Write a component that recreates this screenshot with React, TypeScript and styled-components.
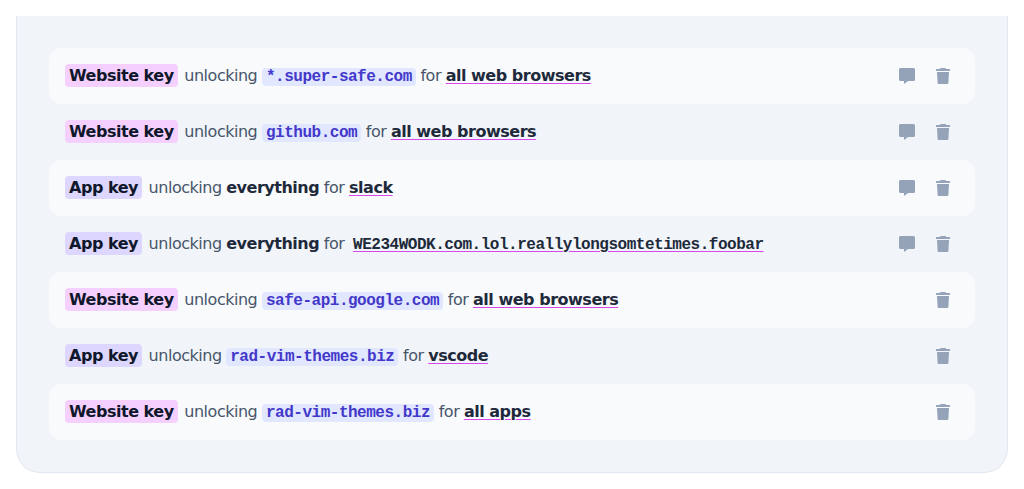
import React from 'react';
import styled, { createGlobalStyle, css } from 'styled-components';

const GlobalStyle = createGlobalStyle`
  *, *::before, *::after { box-sizing: border-box; }
  body {
    margin: 0;
    padding: 16px;
    background: #ffffff;
    color: #475569;
    font-family: "DejaVu Sans", sans-serif;
    font-size: 16px;
    line-height: 24px;
    letter-spacing: -0.03em;
  }
`;

const Panel = styled.section`
  padding: 32px;
  background: #f1f5f9;
  border: 1px solid #e2e8f0;
  border-top: 0;
  border-radius: 0 0 24px 24px;
`;

const KeyList = styled.ul`
  margin: 0;
  padding: 0;
  list-style: none;
`;

const KeyRow = styled.li`
  display: flex;
  align-items: center;
  justify-content: space-between;
  gap: 16px;
  padding: 12px 16px;
  border-radius: 12px;

  &:nth-child(odd) {
    background: #f8fafc;
  }
`;

const Description = styled.p`
  margin: 0;
  min-width: 0;
`;

const KindTag = styled.span<{ $kind: Kind }>`
  margin-right: 2px;
  padding: 2px 4px;
  border-radius: 4px;
  background: ${({ $kind }) => ($kind === 'Website key' ? '#f5d0fe' : '#ddd6fe')};
  color: #0f172a;
  font-weight: 700;
`;

const mono = css`
  font-family: "Liberation Mono", monospace;
  font-size: 16px;
`;

const Domain = styled.code`
  ${mono}
  padding: 0 4px;
  border-radius: 4px;
  background: #e0e7ff;
  color: #4338ca;
  font-weight: 700;
`;

const Everything = styled.strong`
  color: #1e293b;
  font-weight: 700;
`;

const Target = styled.strong<{ $mono?: boolean }>`
  color: #1e293b;
  font-weight: 700;
  text-decoration: underline 1px #d946ef;
  text-underline-offset: 2px;
  ${({ $mono }) => $mono && css`
    ${mono}
    margin-left: 4px;
  `}
`;

const Actions = styled.div`
  display: flex;
  flex-shrink: 0;
  gap: 4px;
`;

const IconButton = styled.button`
  display: flex;
  align-items: center;
  justify-content: center;
  width: 32px;
  height: 32px;
  padding: 0;
  border: 0;
  border-radius: 16px;
  background: transparent;
  color: #94a3b8;
  cursor: pointer;
`;

const Icon = styled.svg`
  display: block;
  width: 16px;
  height: 16px;
  fill: currentColor;
`;

const CommentIcon = () => (
  <Icon viewBox="0 0 16 16" aria-hidden="true">
    <path d="M1.5 0h13A1.5 1.5 0 0 1 16 1.5v10a1.5 1.5 0 0 1-1.5 1.5H9.2L5 16v-3H1.5A1.5 1.5 0 0 1 0 11.5v-10A1.5 1.5 0 0 1 1.5 0z" />
  </Icon>
);

const TrashIcon = () => (
  <Icon viewBox="0 0 16 16" aria-hidden="true">
    <path d="M5.6 0h4.8l.8 1h3.3a.5.5 0 0 1 .5.5v1a.5.5 0 0 1-.5.5h-13a.5.5 0 0 1-.5-.5v-1a.5.5 0 0 1 .5-.5h3.3z" />
    <path d="M2 4h12l-.6 11a1 1 0 0 1-1 1H3.6a1 1 0 0 1-1-1z" />
  </Icon>
);

type Kind = 'Website key' | 'App key';

interface Key {
  kind: Kind;
  domain?: string;
  target: string;
  isBundleId?: boolean;
  hasComment?: boolean;
}

const keys: Key[] = [
  { kind: 'Website key', domain: '*.super-safe.com', target: 'all web browsers', hasComment: true },
  { kind: 'Website key', domain: 'github.com', target: 'all web browsers', hasComment: true },
  { kind: 'App key', target: 'slack', hasComment: true },
  { kind: 'App key', target: 'WE234WODK.com.lol.reallylongsomtetimes.foobar', isBundleId: true, hasComment: true },
  { kind: 'Website key', domain: 'safe-api.google.com', target: 'all web browsers' },
  { kind: 'App key', domain: 'rad-vim-themes.biz', target: 'vscode' },
  { kind: 'Website key', domain: 'rad-vim-themes.biz', target: 'all apps' },
];

export default function App() {
  return (
    <>
      <GlobalStyle />
      <Panel>
        <KeyList>
          {keys.map((key, index) => (
            <KeyRow key={index}>
              <Description>
                <KindTag $kind={key.kind}>{key.kind}</KindTag> unlocking{' '}
                {key.domain ? <Domain>{key.domain}</Domain> : <Everything>everything</Everything>} for{' '}
                <Target $mono={key.isBundleId}>{key.target}</Target>
              </Description>
              <Actions>
                {key.hasComment && (
                  <IconButton type="button" aria-label="View comment">
                    <CommentIcon />
                  </IconButton>
                )}
                <IconButton type="button" aria-label="Delete key">
                  <TrashIcon />
                </IconButton>
              </Actions>
            </KeyRow>
          ))}
        </KeyList>
      </Panel>
    </>
  );
}
